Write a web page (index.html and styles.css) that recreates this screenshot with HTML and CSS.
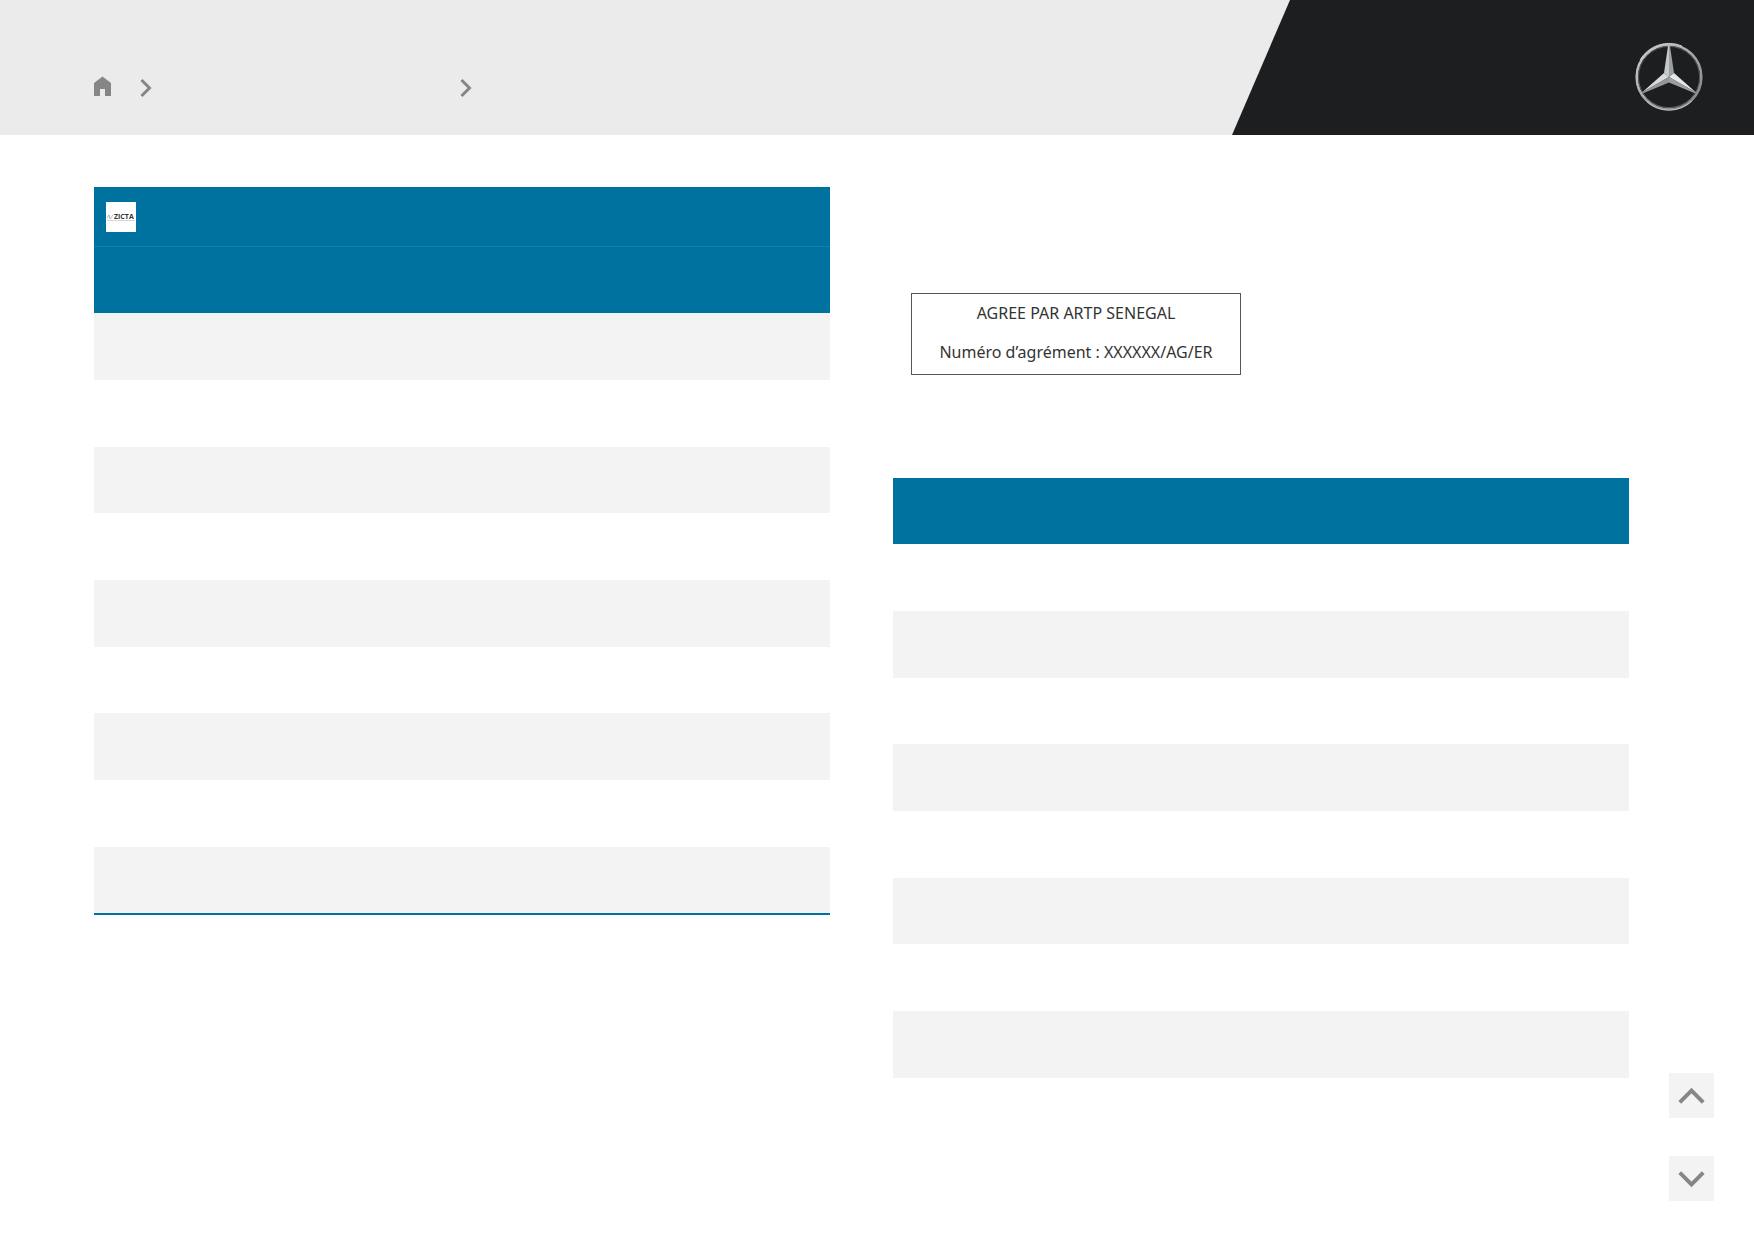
FILE: index.html
```
<!DOCTYPE html>
<html lang="en">
<head>
  <meta charset="UTF-8"/>
  <meta name="viewport" content="width=device-width, initial-scale=1.0"/>
  <title>Mercedes-Benz</title>
  <link rel="stylesheet" href="styles.css">
</head>
<body>
  <header class="header">
    <nav class="breadcrumb">
      <a class="home" href="#" aria-label="Home">
        <svg width="17" height="20" viewBox="0 0 17 20"><path d="M8.500 0.500 L17 7 V20 H11 V13 H6 V20 H0 V7 Z" fill="#868686"/></svg>
      </a>
      <a class="crumb crumb-wide" href="#" aria-label="Section">
        <svg width="12" height="20" viewBox="0 0 12 20"><path d="M1.500 2 L9.500 10 L1.500 18" fill="none" stroke="#868686" stroke-width="3"/></svg>
      </a>
      <a class="crumb" href="#" aria-label="Page">
        <svg width="12" height="20" viewBox="0 0 12 20"><path d="M1.500 2 L9.500 10 L1.500 18" fill="none" stroke="#868686" stroke-width="3"/></svg>
      </a>
    </nav>
    <div class="brand">
      <svg width="70" height="70" viewBox="0 0 70 70" role="img" aria-label="Mercedes-Benz">
        <defs>
          <linearGradient id="ring" x1="0" y1="0" x2="1" y2="1">
            <stop offset="0" stop-color="#c8cccd"/>
            <stop offset="0.500" stop-color="#a4a9aa"/>
            <stop offset="1" stop-color="#7f8586"/>
          </linearGradient>
        </defs>
        <circle cx="35" cy="35" r="32.300" fill="none" stroke="url(#ring)" stroke-width="2.600"/>
        <circle cx="35" cy="35" r="30.600" fill="none" stroke="#555b5d" stroke-width="1"/>
        <path d="M6 18 A33.500 33.500 0 0 1 48 4" fill="none" stroke="#e2e5e5" stroke-width="0.800"/>
        <path d="M13 60 A33.500 33.500 0 0 0 58 59" fill="none" stroke="#c9cdce" stroke-width="0.800"/>
        <!-- star: light and dark half of each point -->
        <path d="M34 4 H35 V35 L30 31 Z" fill="#c5c9ca"/>
        <path d="M35 4 H36 L40 31 L35 35 Z" fill="#9a9fa1"/>
        <path d="M8 50.500 L30 31 L35 35 Z" fill="#d8dbdb"/>
        <path d="M8 50.500 L8.500 51.500 L35 40.500 V35 Z" fill="#92989a"/>
        <path d="M62 50.500 L40 31 L35 35 Z" fill="#e6e8e8"/>
        <path d="M62 50.500 L61.500 51.500 L35 40.500 V35 Z" fill="#9a9fa1"/>
      </svg>
    </div>
  </header>

  <main class="content">
    <section class="column">
      <table class="table">
        <thead>
          <tr class="logo-row">
            <th colspan="3">
              <svg class="zicta" width="30" height="30" viewBox="0 0 30 30">
                <rect width="30" height="30" fill="#fff"/>
                <path d="M1 16 L3 13 L4 17 L7 13" fill="none" stroke="#999" stroke-width="0.700"/>
                <text x="8" y="17" font-size="7" font-weight="700" fill="#333">ZICTA</text>
                <path d="M1 18.500 H29" stroke="#bbb" stroke-width="0.600"/>
              </svg>
            </th>
          </tr>
          <tr><th></th><th></th><th></th></tr>
        </thead>
        <tbody class="odd-shaded closed">
          <tr><td></td><td></td><td></td></tr>
          <tr><td></td><td></td><td></td></tr>
          <tr><td></td><td></td><td></td></tr>
          <tr><td></td><td></td><td></td></tr>
          <tr><td></td><td></td><td></td></tr>
          <tr><td></td><td></td><td></td></tr>
          <tr><td></td><td></td><td></td></tr>
          <tr><td></td><td></td><td></td></tr>
          <tr><td></td><td></td><td></td></tr>
        </tbody>
      </table>
    </section>

    <section class="column">
      <div class="approval">
        <p>AGREE PAR ARTP SENEGAL</p>
        <p>Numéro d’agrément : XXXXXX/AG/ER</p>
      </div>
      <table class="table">
        <thead>
          <tr><th></th><th></th><th></th></tr>
        </thead>
        <tbody class="even-shaded">
          <tr><td></td><td></td><td></td></tr>
          <tr><td></td><td></td><td></td></tr>
          <tr><td></td><td></td><td></td></tr>
          <tr><td></td><td></td><td></td></tr>
          <tr><td></td><td></td><td></td></tr>
          <tr><td></td><td></td><td></td></tr>
          <tr><td></td><td></td><td></td></tr>
          <tr><td></td><td></td><td></td></tr>
        </tbody>
      </table>
    </section>
  </main>

  <div class="pager">
    <button type="button" aria-label="Previous page">
      <svg width="45" height="45" viewBox="0 0 46 46"><path d="M11 30 L23 18 L35 30" fill="none" stroke="#868686" stroke-width="4"/></svg>
    </button>
    <button type="button" aria-label="Next page">
      <svg width="45" height="45" viewBox="0 0 46 46"><path d="M11 17 L23 29 L35 17" fill="none" stroke="#868686" stroke-width="4"/></svg>
    </button>
  </div>
</body>
</html>
```
FILE: styles.css
```
* { box-sizing: border-box; margin: 0; padding: 0; }

body {
  font-family: "Noto Sans", "Open Sans", sans-serif;
  background: #fff;
  color: #333;
}

svg { display: block; }

.header {
  display: flex;
  justify-content: space-between;
  height: 135px;
  background: #ebebeb;
}

.breadcrumb {
  display: flex;
  align-items: flex-start;
  padding: 76px 0 0 94px;
}

.home { margin-right: 29px; }
.crumb { padding-top: 2px; }
.crumb-wide { width: 320px; }

.brand {
  display: flex;
  justify-content: flex-end;
  width: 522px;
  padding: 42px 50px 0 0;
  background: #1c1e1f;
  clip-path: polygon(58px 0, 100% 0, 100% 100%, 0 100%);
}

.content {
  display: flex;
  gap: 63px;
  padding: 52px 125px 52px 94px;
}

.column { flex: 1; }

.table {
  width: 100%;
  border-collapse: separate;
  border-spacing: 0;
  table-layout: fixed;
}

.table th {
  height: 66px;
  padding: 0 12px;
  background: #00729f;
  text-align: left;
}

.table .logo-row th {
  height: 60px;
  border-bottom: 1px solid #167ea8;
}

.table td { height: 67px; }
.table tr:nth-child(3n) td { height: 66px; }

.odd-shaded tr:nth-child(odd) td,
.even-shaded tr:nth-child(even) td {
  background: #f3f3f3;
}

.table .closed tr:last-child td {
  height: 68px;
  border-bottom: 2px solid #00729f;
}

.zicta text { font-family: "Open Sans", sans-serif; }

.approval {
  width: 330px;
  margin: 106px 0 103px 18px;
  padding-bottom: 2px;
  border: 1px solid #555;
  text-align: center;
}

.approval p {
  font-size: 16px;
  line-height: 39px;
}

.pager {
  position: fixed;
  right: 40px;
  bottom: 39px;
  display: flex;
  flex-direction: column;
  gap: 38px;
}

.pager button {
  width: 45px;
  height: 45px;
  border: none;
  background: #f3f3f3;
  cursor: pointer;
}
```
